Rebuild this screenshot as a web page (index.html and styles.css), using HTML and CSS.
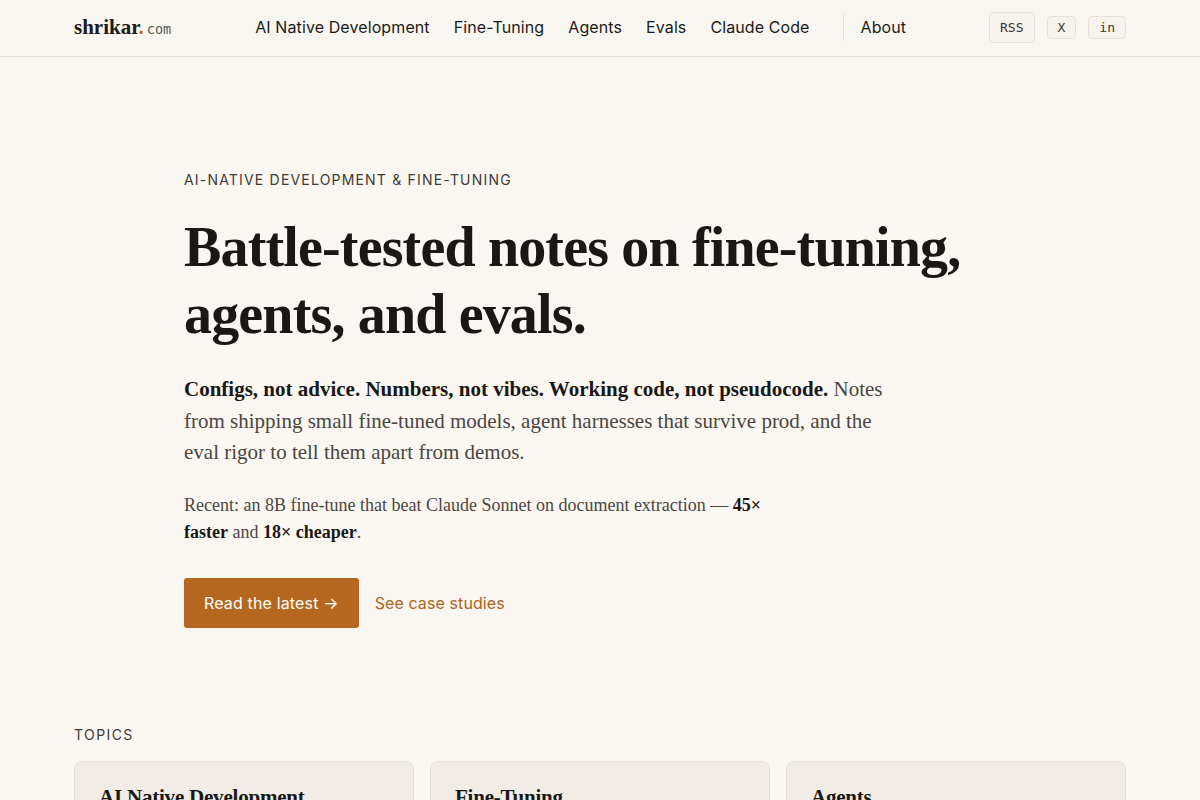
FILE: index.html
```html
<!DOCTYPE html>
<html lang="en">
<head>
    <meta charset="UTF-8">
    <meta name="viewport" content="width=device-width, initial-scale=1.0">
    <title>shrikar.com</title>
    <link rel="stylesheet" href="styles.css">
</head>
<body>
    <header class="site-header">
        <div class="header-inner">
            <a class="logo" href="#">shrikar<span class="logo-dot">.</span><span class="logo-tld">com</span></a>
            <nav class="main-nav">
                <a href="#">AI Native Development</a>
                <a href="#">Fine-Tuning</a>
                <a href="#">Agents</a>
                <a href="#">Evals</a>
                <a href="#">Claude Code</a>
                <span class="nav-divider"></span>
                <a href="#">About</a>
            </nav>
            <div class="social">
                <a class="chip chip-rss" href="#">RSS</a>
                <a class="chip" href="#">X</a>
                <a class="chip" href="#">in</a>
            </div>
        </div>
    </header>

    <main class="page">
        <section class="hero">
            <p class="eyebrow">AI-Native Development &amp; Fine-Tuning</p>
            <h1>Battle-tested notes on fine-tuning, agents, and evals.</h1>
            <p class="lede"><strong>Configs, not advice. Numbers, not vibes. Working code, not pseudocode.</strong> Notes from shipping small fine-tuned models, agent harnesses that survive prod, and the eval rigor to tell them apart from demos.</p>
            <p class="recent">Recent: an 8B fine-tune that beat Claude Sonnet on document extraction — <strong>45× faster</strong> and <strong>18× cheaper</strong>.</p>
            <div class="actions">
                <a class="btn-primary" href="#">Read the latest →</a>
                <a class="btn-link" href="#">See case studies</a>
            </div>
        </section>

        <section class="topics">
            <h2 class="section-label">Topics</h2>
            <div class="topic-grid">
                <div class="topic-card"><h3>AI Native Development</h3></div>
                <div class="topic-card"><h3>Fine-Tuning</h3></div>
                <div class="topic-card"><h3>Agents</h3></div>
            </div>
        </section>
    </main>
</body>
</html>
```

FILE: styles.css
```css
* {
    box-sizing: border-box;
}

body {
    margin: 0;
    background-color: #faf7f2;
    color: #1c1a17;
    font-family: Inter, "Noto Sans", sans-serif;
}

a {
    color: inherit;
    text-decoration: none;
}

/* header */
.site-header {
    border-bottom: 1px solid #e6e1d8;
    background-color: #f8f6f1;
}

.header-inner {
    max-width: 1052px;
    margin: 0 auto;
    height: 56px;
    display: flex;
    align-items: center;
    padding-bottom: 2px;
}

.logo {
    font-family: "Liberation Serif", serif;
    font-weight: bold;
    font-size: 21px;
    color: #1c1a17;
}
.logo-dot {
    color: #b8691f;
}
.logo-tld {
    font-family: "DejaVu Sans Mono", monospace;
    font-weight: normal;
    font-size: 13.5px;
    color: #5a5650;
    margin-left: 3px;
}

.main-nav {
    display: flex;
    align-items: center;
    gap: 24px;
    margin-left: 84px;
    font-size: 16px;
    letter-spacing: 0.1px;
    color: #1c1a17;
}

.nav-divider {
    width: 1px;
    height: 28px;
    background-color: #e4dfd6;
    margin: 0 -7px 0 9px;
}

.social {
    margin-left: auto;
    display: flex;
    align-items: center;
    gap: 12px;
}

.chip {
    font-family: "DejaVu Sans Mono", monospace;
    font-size: 13px;
    line-height: 15px;
    color: #3a3732;
    border: 1px solid #e6e1d8;
    border-radius: 4px;
    padding: 3px 10px;
    background-color: #f6f3ee;
}
.chip-rss {
    padding: 7px 10px;
}

/* hero */
.page {
    max-width: 1052px;
    margin: 0 auto;
}

.hero {
    padding: 114px 110px 0;
}

.eyebrow {
    margin: 0;
    font-size: 14px;
    letter-spacing: 0.085em;
    text-transform: uppercase;
    color: #3d3a35;
}

h1 {
    font-family: "Liberation Serif", serif;
    font-size: 56px;
    line-height: 1.2;
    letter-spacing: -0.015em;
    margin: 26px 0 0;
    max-width: 800px;
    color: #1a1815;
}

.lede {
    font-family: "Liberation Serif", serif;
    font-size: 21px;
    line-height: 1.5;
    color: #4a4640;
    max-width: 720px;
    margin: 26px 0 0;
}
.lede strong {
    color: #1a1815;
}

.recent {
    font-family: "Liberation Serif", serif;
    font-size: 18px;
    line-height: 1.5;
    color: #4a4640;
    max-width: 590px;
    margin: 23px 0 0;
}
.recent strong {
    color: #1a1815;
}

.actions {
    display: flex;
    align-items: center;
    gap: 16px;
    margin-top: 32px;
}

.btn-primary {
    background-color: #b5661f;
    color: #fff;
    font-size: 16px;
    letter-spacing: 0.15px;
    padding: 15px 20px;
    border-radius: 3px;
}

.btn-link {
    color: #b0621c;
    font-size: 16px;
    letter-spacing: 0.1px;
}

/* topics */
.topics {
    margin-top: 98px;
}

.section-label {
    margin: 0;
    font-size: 14px;
    font-weight: normal;
    letter-spacing: 0.1em;
    text-transform: uppercase;
    color: #3d3a35;
}

.topic-grid {
    display: grid;
    grid-template-columns: repeat(3, 1fr);
    gap: 16px;
    margin-top: 18px;
}

.topic-card {
    background-color: #f1ede6;
    border: 1px solid #e6e1d8;
    border-radius: 8px;
    padding: 23px 24px;
    min-height: 160px;
}

.topic-card h3 {
    margin: 0;
    font-family: "Liberation Serif", serif;
    font-size: 21px;
    letter-spacing: -0.01em;
    color: #1a1815;
}
```
